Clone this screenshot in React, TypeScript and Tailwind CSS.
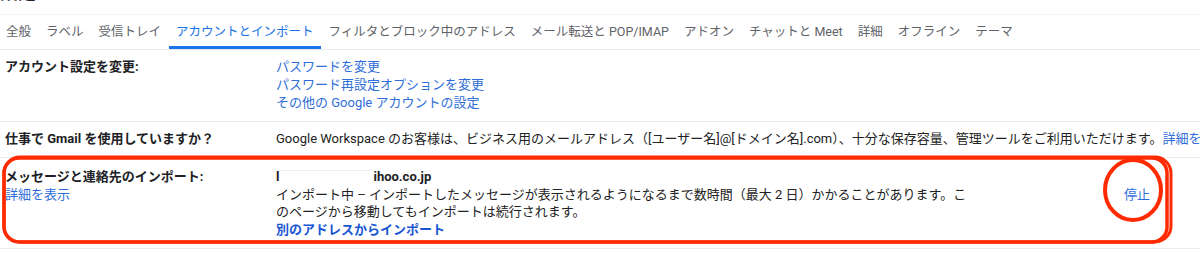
import React from 'react'

const tabs = [
  '全般',
  'ラベル',
  '受信トレイ',
  'アカウントとインポート',
  'フィルタとブロック中のアドレス',
  'メール転送と POP/IMAP',
  'アドオン',
  'チャットと Meet',
  '詳細',
  'オフライン',
  'テーマ',
]

const ACTIVE = 'アカウントとインポート'

function Tabs() {
  return (
    <div className="flex h-[36px] border-t border-b border-t-[#f1f3f4] border-b-[#e8eaed]">
      {tabs.map((t, i) => (
        <div
          key={t}
          className={
            (i === 0 ? 'pl-[6px] pr-[7.5px] ' : 'px-[7.5px] ') +
            (t === ACTIVE
              ? 'flex items-center text-[12.5px] text-[#1a73e8] border-b-[3px] border-[#1a73e8] pt-[3px] whitespace-nowrap'
              : 'flex items-center text-[12.5px] text-[#5f6368] whitespace-nowrap')
          }
        >
          {t}
        </div>
      ))}
    </div>
  )
}

function Row({
  label,
  sub,
  children,
  className,
}: {
  label: string
  sub?: string
  children: React.ReactNode
  className: string
}) {
  return (
    <div className={'flex border-b border-[#e8eaed] ' + className}>
      <div className="w-[276px] shrink-0 pl-[5px]">
        <div className="font-bold text-[#202124]">{label}</div>
        {sub && <div className="text-[#2f6ed8]">{sub}</div>}
      </div>
      <div className="flex-1 min-w-0">{children}</div>
    </div>
  )
}

export default function App() {
  return (
    <div className="relative w-[1200px] h-[255px] overflow-hidden bg-white text-[13px] text-[#222] font-[Roboto,'Noto_Sans_CJK_JP',sans-serif]">
      <div className="h-[14px] overflow-hidden">
        <div className="-mt-[16px] text-[18px] leading-[18px] font-bold text-[#202124]">設定</div>
      </div>

      <Tabs />

      <Row label="アカウント設定を変更:" className="leading-[18px] pt-[8px] pb-[9px]">
        <div className="text-[#2f6ed8]">パスワードを変更</div>
        <div className="text-[#2f6ed8]">パスワード再設定オプションを変更</div>
        <div className="text-[#2f6ed8]">その他の Google アカウントの設定</div>
      </Row>

      <Row label="仕事で Gmail を使用していますか？" className="leading-[18px] pt-[8px] pb-[9px]">
        <div className="whitespace-nowrap">
          Google Workspace のお客様は、ビジネス用のメールアドレス（[ユーザー名]@[ドメイン名].com）、十分な保存容量、管理ツールをご利用いただけます。
          <span className="text-[#2f6ed8]">詳細を表示</span>
        </div>
      </Row>

      <Row label="メッセージと連絡先のインポート:" sub="詳細を表示" className="leading-[17.5px] pt-[10px] pb-[10px]">
        <div className="flex">
          <div className="w-[720px]">
            <div className="font-bold text-[#202124] whitespace-nowrap">
              l<span className="inline-block w-[94px] h-[16px] align-middle border-t border-[#eee]" />
              ihoo.co.jp
            </div>
            <div>
              インポート中 – インポートしたメッセージが表示されるようになるまで数時間（最大 2 日）かかることがあります。こ
              <br />
              のページから移動してもインポートは続行されます。
            </div>
            <div className="font-bold text-[#1a56d4]">別のアドレスからインポート</div>
          </div>
          <div className="ml-auto pr-[50px] pt-[17.5px] text-[#2f6ed8]">停止</div>
        </div>
      </Row>

      {/* red annotation marks */}
      <svg className="absolute left-0 top-0 pointer-events-none" width="1200" height="255" viewBox="0 0 1200 255">
        <rect x="4" y="158" width="1163" height="84" rx="15" fill="none" stroke="#ff2a00" strokeWidth="3.5" />
        <rect x="4" y="157" width="1167" height="85" rx="16" fill="none" stroke="#ff2a00" strokeWidth="3" />
        <ellipse cx="1133" cy="190" rx="28" ry="30" fill="none" stroke="#ff2a00" strokeWidth="4" />
      </svg>
    </div>
  )
}
